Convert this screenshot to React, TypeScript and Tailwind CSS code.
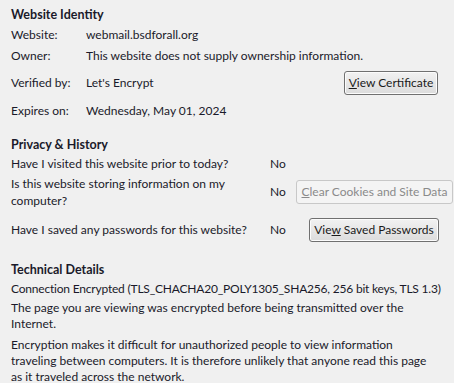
import React from "react";

const font = { fontFamily: 'Lato, "Noto Sans", sans-serif' };

function Btn({ children, disabled, className = "" }: { children: React.ReactNode; disabled?: boolean; className?: string }) {
  return (
    <div
      className={
        "flex h-[24px] items-center justify-center whitespace-nowrap rounded-[3px] border text-[12px] " +
        (disabled
          ? "border-[#c8c8c8] bg-[#f4f4f4] text-[#8a8a8a] "
          : "border-[#707070] bg-gradient-to-b from-[#f2f2f2] to-[#dcdcdc] text-[#1a1a1a] shadow-[inset_0_0_0_1px_#fcfcfc] ") +
        className
      }
    >
      {children}
    </div>
  );
}

export default function App() {
  return (
    <div className="h-[383px] w-[454px] overflow-hidden whitespace-nowrap bg-[#f0f0f0] pl-[11px] text-[12px] leading-[16px] text-[#1a1a2a]" style={font}>
      <div className="flex h-[20px] items-center pt-[10px] text-[12.5px] font-bold">Website Identity</div>
      <div className="flex h-[20px] items-center mt-[5px]">
        <div className="w-[75px]">Website:</div>
        <div>webmail.bsdforall.org</div>
      </div>
      <div className="flex h-[20px] items-center mt-[1px]">
        <div className="w-[75px]">Owner:</div>
        <div>This website does not supply ownership information.</div>
      </div>
      <div className="flex h-[28px] items-center mt-[3px]">
        <div className="w-[75px]">Verified by:</div>
        <div className="flex-1">Let's Encrypt</div>
        <Btn className="mr-[16px] w-[94px]">
          <span>
            <u>V</u>iew Certificate
          </span>
        </Btn>
      </div>
      <div className="flex h-[20px] items-center mt-[4px]">
        <div className="w-[75px]">Expires on:</div>
        <div>Wednesday, May 01, 2024</div>
      </div>

      <div className="flex h-[20px] items-center mt-[14px] text-[12.5px] font-bold">Privacy &amp; History</div>
      <div className="flex h-[18px] items-center">
        <div className="w-[259px]">Have I visited this website prior to today?</div>
        <div>No</div>
      </div>
      <div className="flex h-[34px] items-center mt-[2px]">
        <div className="w-[259px] leading-[17px]">
          Is this website storing information on my
          <br />
          computer?
        </div>
        <div className="w-[26px]">No</div>
        <Btn disabled className="w-[157px]">
          <span>
            <u>C</u>lear Cookies and Site Data
          </span>
        </Btn>
      </div>
      <div className="flex h-[26px] items-center mt-[8px]">
        <div className="w-[259px]">Have I saved any passwords for this website?</div>
        <div className="w-[39px]">No</div>
        <Btn className="w-[130px]">
          <span>
            Vie<u>w</u> Saved Passwords
          </span>
        </Btn>
      </div>

      <div className="flex h-[20px] items-center mt-[17px] text-[12.5px] font-bold">Technical Details</div>
      <div className="flex h-[18px] items-center tracking-[-0.2px]">
        Connection Encrypted (TLS_CHACHA20_POLY1305_SHA256, 256 bit keys, TLS 1.3)
      </div>
      <div className="mt-[2px]">
        The page you are viewing was encrypted before being transmitted over the
        <br />
        Internet.
      </div>
      <div className="mt-[5px]">
        Encryption makes it difficult for unauthorized people to view information
        <br />
        traveling between computers. It is therefore unlikely that anyone read this page
        <br />
        as it traveled across the network.
      </div>
    </div>
  );
}
